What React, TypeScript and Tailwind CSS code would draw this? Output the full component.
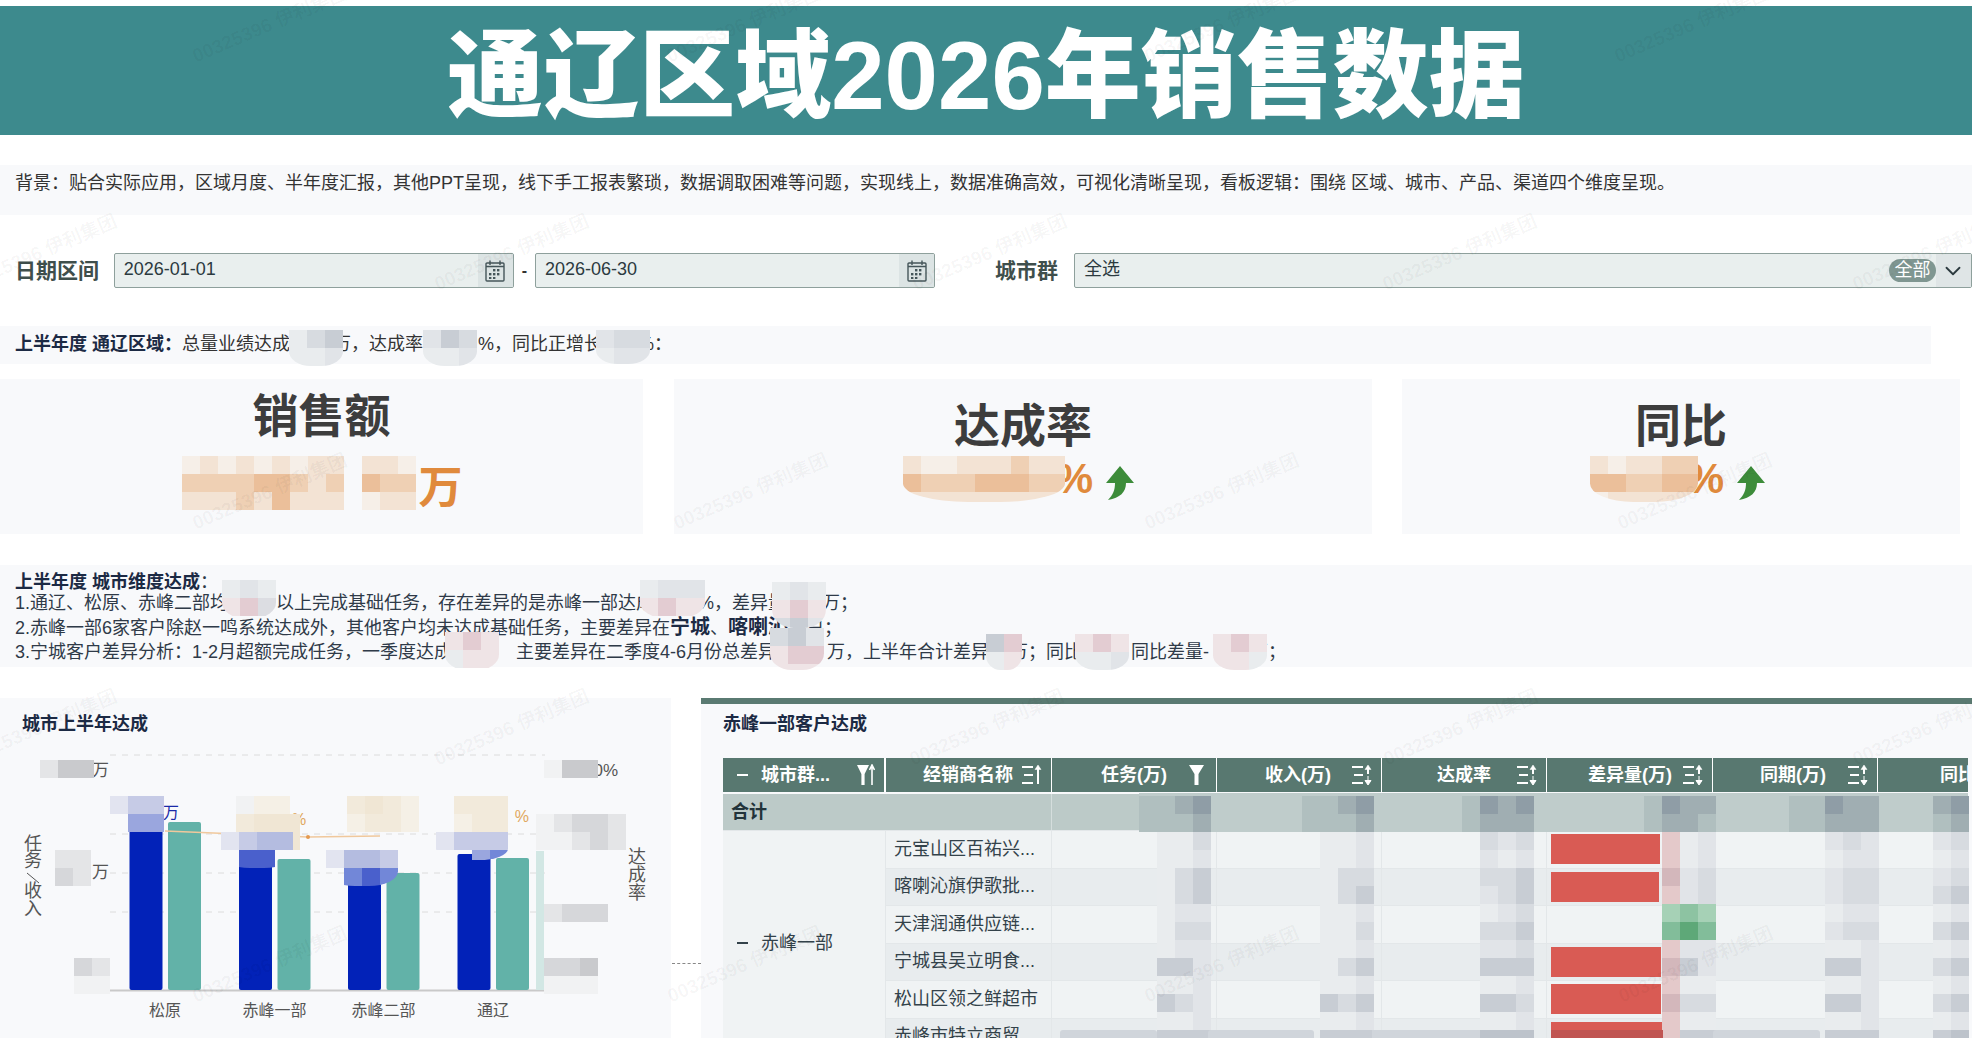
import { ChevronDown } from 'lucide-react';

// shade letters used by the redaction mosaics
const shades: Record<string, string> = {
  '.': 'transparent',
  a: '#e9ecee', b: '#e1e4e8', c: '#d7dbe0', d: '#c8cdd4', e: '#bdc3cb',
  t: '#b0bfbf', u: '#a0aeb2', v: '#8f9da6',
  i: '#f6efe8', j: '#f3e3d4', k: '#efd0b4', l: '#ebbf9a',
  m: '#f5f0e6', n: '#f2eadb', o: '#f0e6d4',
  p: '#e2e4f0', q: '#c6cbe6', r: '#9aa6de', s: '#4a60cc', w: '#7287d8', x: '#b4bce0',
  f: '#efe4e6', g: '#e3ccd2', h: '#dcdde2',
  y: '#a6d1b6', z: '#8dc3a2', A: '#5ea878', B: '#82bd9a',
  C: '#e4c9ca', D: '#d3b7bb',
  E: '#f1f2f3', F: '#e4e5e7', G: '#d6d7da', H: '#c9cacd',
};

type MosaicSpec = { x: number; y: number; rows: string[]; w?: number; h?: number; round?: boolean };

const mosaics: MosaicSpec[] = [
  // kpi sentence
  { x: 289, y: 330, rows: ['acd', 'aab'], h: 36, round: true },
  { x: 423, y: 330, rows: ['bdc', 'aab'], h: 36, round: true },
  { x: 596, y: 330, rows: ['bcc', 'abb'], h: 34, round: true },
  // kpi values
  { x: 182, y: 456, rows: ['ijijijijj.jji', 'kkkkllkjk.lkk', 'jjjkjljjj.ijj'] },
  { x: 903, y: 456, rows: ['jiijjjkjj', 'lkkklllkk', 'jjjjjjjjj'], h: 46, round: true },
  { x: 1590, y: 456, rows: ['jijjkk', 'llkkll', 'ijjjjj'], h: 46, round: true },
  // city analysis
  { x: 222, y: 580, rows: ['aba', 'fgh'], h: 38, round: true },
  { x: 640, y: 580, rows: ['abbb', 'fgff'], w: 65, h: 38, round: true },
  { x: 772, y: 582, rows: ['aba', 'fgf', 'cdb'], h: 46, round: true },
  { x: 445, y: 632, rows: ['fgf', 'aff'], h: 38, round: true },
  { x: 770, y: 628, rows: ['cdb', 'fgg', 'fff'], h: 42, round: true },
  { x: 986, y: 634, rows: ['dg', 'af'], h: 36, round: true },
  { x: 1075, y: 634, rows: ['fgf', 'aab'], h: 36, round: true },
  { x: 1213, y: 634, rows: ['fgf', 'ffa'], h: 36, round: true },
  // chart axes
  { x: 40, y: 760, rows: ['FHH'] },
  { x: 55, y: 850, rows: ['FF', 'GF'] },
  { x: 74, y: 958, rows: ['GF', 'EE'] },
  { x: 544, y: 760, rows: ['EHH'] },
  { x: 536, y: 814, rows: ['EFGGF', 'EEFGF'] },
  { x: 544, y: 904, rows: ['FGGG'], w: 64 },
  { x: 544, y: 958, rows: ['GGH', 'EEE'] },
  // chart labels
  { x: 110, y: 796, rows: ['pqq', '.rr'] },
  { x: 236, y: 796, rows: ['Emm.', 'nooo', 'oooo'], w: 64 },
  { x: 221, y: 832, rows: ['pqxx', '.ss'], h: 36, round: true },
  { x: 347, y: 796, rows: ['nonm', 'mnnm'] },
  { x: 326, y: 850, rows: ['pxxq', '.wsw'], h: 36, round: true },
  { x: 454, y: 796, rows: ['nnn', 'mnn'] },
  { x: 436, y: 832, rows: ['pqqq', '..rw'], h: 28, round: true },
  // table, total row
  { x: 1139, y: 796, rows: ['ttuv', 'tttu'] },
  { x: 1302, y: 796, rows: ['ttuv', 'tttu'] },
  { x: 1462, y: 796, rows: ['tvuv', 'tuuu'] },
  { x: 1644, y: 796, rows: ['tvuu', 'tuut'] },
  { x: 1789, y: 796, rows: ['ttvuu', 'ttuuu'] },
  { x: 1933, y: 796, rows: ['uv', 'tu'] },
  // table, columns
  { x: 1157, y: 832, rows: ['aac', 'aab', 'acd', 'acd', 'abb', 'acc', 'abb', 'ddb', 'aab', 'dcb', 'aab', 'ddd'] },
  { x: 1320, y: 832, rows: ['aab', 'aab', 'acc', 'acd', 'aab', 'aac', 'aab', 'acd', 'aab', 'dcd', 'aab', 'ddd'] },
  { x: 1480, y: 832, rows: ['cbc', 'bab', 'ccd', 'bcd', 'abc', 'ccd', 'bbc', 'ddd', 'aab', 'ddc', 'aab', 'eee'] },
  { x: 1662, y: 832, rows: ['Cab', 'Cab', 'Dbc', 'Cbc', 'yzy', 'BAB', 'Cbb', 'Ddb', 'Caa', 'Dcc', 'Caa', 'Cdd'] },
  { x: 1825, y: 832, rows: ['bcb', 'abb', 'bcc', 'bcc', 'abb', 'bcc', 'aab', 'ddb', 'aab', 'ddb', 'aab', 'ddd'] },
  { x: 1933, y: 832, rows: ['bc', 'ab', 'bc', 'cd', 'ab', 'cd', 'ab', 'cd', 'ab', 'cd', 'ab', 'de'] },
];

const bars = [
  { label: '松原', x: 129.5, blueTop: 823, tealTop: 821 },
  { label: '赤峰一部', x: 239, blueTop: 857, tealTop: 858 },
  { label: '赤峰二部', x: 348, blueTop: 877, tealTop: 872 },
  { label: '通辽', x: 457.5, blueTop: 853, tealTop: 857 },
];

const tableRows = [
  { name: '元宝山区百祐兴...', bar: 'w-[109px]', alt: false },
  { name: '喀喇沁旗伊歌批...', bar: 'w-[108px]', alt: true },
  { name: '天津润通供应链...', bar: '', alt: false },
  { name: '宁城县吴立明食...', bar: 'w-[110px]', alt: true },
  { name: '松山区领之鲜超市', bar: 'w-[110px]', alt: false },
  { name: '赤峰市特立商贸', bar: 'w-[112px]', alt: true },
];

const watermarks = [
  [270, 25], [744, 25], [1222, 25], [1692, 25],
  [40, 253], [512, 253], [990, 253], [1460, 253], [1930, 253],
  [270, 492], [751, 492], [1222, 492], [1695, 492],
  [40, 728], [512, 728], [987, 728], [1461, 728], [1930, 728],
  [270, 965], [745, 965], [1222, 965], [1696, 965],
];

function Mosaic({ x, y, rows, w, h, round }: MosaicSpec) {
  return (
    <div
      className={`absolute overflow-hidden ${round ? 'rounded-b-[40%]' : ''}`}
      style={{ left: x, top: y, height: h ?? rows.length * 18, width: w ?? rows[0].length * 18 }}
    >
      {rows.map((row, i) => (
        <div key={i} className="flex h-[18px]">
          {row.split('').map((c, j) => (
            <div key={j} className="w-[18px] h-[18px] shrink-0" style={{ backgroundColor: shades[c] }} />
          ))}
        </div>
      ))}
    </div>
  );
}

function CalendarIcon() {
  return (
    <div className="w-[35px] self-stretch bg-[#dce4e4] flex items-center justify-center">
      <svg width="20" height="22" viewBox="0 0 20 22" fill="none" stroke="#45565a" strokeWidth="1.4">
        <rect x="1" y="3" width="18" height="18" rx="1" />
        <path d="M5 0.5V5M15 0.5V5M1 6.5H19" />
        <g fill="#45565a" stroke="none">
          <rect x="8" y="9" width="2.4" height="2.4" />
          <rect x="12" y="9" width="2.4" height="2.4" />
          <rect x="4" y="13" width="2.4" height="2.4" />
          <rect x="8" y="13" width="2.4" height="2.4" />
          <rect x="12" y="13" width="2.4" height="2.4" />
          <rect x="4" y="17" width="2.4" height="2" />
          <rect x="8" y="17" width="2.4" height="2" />
        </g>
      </svg>
    </div>
  );
}

function DateInput({ value }: { value: string }) {
  return (
    <div className="w-[401px] h-[35px] flex items-center justify-between bg-[#e9efee] border border-[#8ea09c] rounded-[2px] overflow-hidden">
      <span className="pl-[9px] pb-[2px] text-[18px] text-[#2c3a3f]">{value}</span>
      <CalendarIcon />
    </div>
  );
}

function SortIcon({ down = true }: { down?: boolean }) {
  return (
    <svg width="22" height="22" viewBox="0 0 22 22" fill="none" stroke="#fff" strokeWidth="2">
      <path d="M1 3H12M3 11H12M1 19H12" />
      <path d={down ? 'M17 3V10' : 'M17 3V20'} />
      <path d="M14 5.5L17 1L20 5.5Z" fill="#fff" strokeWidth="0.5" />
      {down && <path d="M17 12V18M14 16.5L17 21L20 16.5Z" fill="#fff" strokeWidth="1" />}
    </svg>
  );
}

function Funnel({ small = false }: { small?: boolean }) {
  return (
    <svg width={small ? 12 : 15} height="22" viewBox="0 0 15 22" preserveAspectRatio="none" fill="#fff">
      <path d="M0 1H15L9.5 10V21H5.5V10Z" />
    </svg>
  );
}

function GreenArrow() {
  return (
    <svg width="28" height="34" viewBox="0 0 28 34" fill="#3d8c3a">
      <path d="M14 0L28 17H20C20 26 14 32 2 34C7 29 9 24 9 17H0Z" />
    </svg>
  );
}

function Card({ title, className, titleClass, children }: { title: string; className: string; titleClass: string; children: React.ReactNode }) {
  return (
    <div className={`bg-[#f8f9fb] h-full flex flex-col items-center ${className}`}>
      <h2 className={`text-[46px] leading-[46px] font-bold text-[#3d3d3d] ${titleClass}`}>{title}</h2>
      {children}
    </div>
  );
}

function Chart() {
  return (
    <svg width="671" height="298" viewBox="0 740 671 298" className="block">
      {[754, 833, 872, 911].map((y) => (
        <line key={y} x1="110" x2="545" y1={y} y2={y} stroke="#dcdcdc" strokeDasharray="6 6" />
      ))}
      <line x1="110" x2="548" y1="989.5" y2="989.5" stroke="#c9c9c9" strokeWidth="2" />
      {bars.map((b) => (
        <g key={b.label}>
          <rect x={b.x} y={b.blueTop} width="33" height={989 - b.blueTop} rx="2" fill="#0222b8" />
          <rect x={b.x + 38.5} y={b.tealTop} width="33" height={989 - b.tealTop} rx="2" fill="#62b2a8" />
          <text x={b.x + 35.5} y="1015" textAnchor="middle" fontSize="16" fill="#555">{b.label}</text>
        </g>
      ))}
      <path d="M165 830L308 836L380 835" stroke="#f0c89c" strokeWidth="1.5" fill="none" />
      <circle cx="308" cy="836" r="2" fill="#e49a50" />
      <rect x="536" y="850" width="8" height="139" fill="#d2e7e4" />
      <g fontSize="17" fill="#555">
        <text x="92" y="775">万</text>
        <text x="92" y="877">万</text>
        <text x="618" y="775" textAnchor="end">00%</text>
        <text x="618" y="838" textAnchor="end">%</text>
      </g>
      <text x="163" y="817" fontSize="16" fill="#1a2aa8">万</text>
      <text x="490" y="849" fontSize="16" fill="#1a2aa8">万</text>
      <text x="529" y="821" fontSize="16" fill="#e0a860" textAnchor="end">%</text>
      <text x="292" y="824" fontSize="16" fill="#e0a860">%</text>
      <g fontSize="18" fill="#555" textAnchor="middle">
        <text x="33" y="849">任</text>
        <text x="33" y="866">务</text>
        <path d="M27 872L39 882" stroke="#555" fill="none" />
        <text x="33" y="896">收</text>
        <text x="33" y="914">入</text>
        <text x="637" y="862">达</text>
        <text x="637" y="880">成</text>
        <text x="637" y="898">率</text>
      </g>
    </svg>
  );
}

function SalesTable() {
  return (
    <div className="w-[1245px] text-[18px] text-[#33424a]">
      <div className="grid grid-cols-[163px_166px_165px_165px_165px_166px_165px_90px] h-[34px] bg-[#587870] text-white font-bold mb-[2px]">
        <div className="flex items-center pl-[14px] border-r-2 border-white">
          <span className="w-[11px] h-[2px] bg-white mr-[13px]" />
          <span>城市群...</span>
          <span className="flex ml-[27px]">
            <Funnel small />
            <svg width="6" height="22" viewBox="0 0 6 22" fill="none" stroke="#fff" strokeWidth="1.6"><path d="M3 21V3M0.5 6L3 1L5.5 6" /></svg>
          </span>
        </div>
        <div className="flex items-center justify-end pr-[8px] border-r border-white">
          <span className="mr-[8px]">经销商名称</span><SortIcon down={false} />
        </div>
        <div className="flex items-center justify-end pr-[12px] border-r border-white">
          <span className="mr-[22px]">任务(万)</span><Funnel />
        </div>
        <div className="flex items-center justify-end pr-[8px] border-r border-white">
          <span className="mr-[20px]">收入(万)</span><SortIcon />
        </div>
        <div className="flex items-center justify-end pr-[8px] border-r border-white">
          <span className="mr-[25px]">达成率</span><SortIcon />
        </div>
        <div className="flex items-center justify-end pr-[8px] border-r border-white">
          <span className="mr-[10px]">差异量(万)</span><SortIcon />
        </div>
        <div className="flex items-center justify-end pr-[8px] border-r border-white">
          <span className="mr-[21px]">同期(万)</span><SortIcon />
        </div>
        <div className="flex items-center pl-[62px] whitespace-nowrap overflow-hidden">同比</div>
      </div>
      <div className="grid grid-cols-[329px_916px] h-[36px] bg-[#bccac8] font-bold text-[#22333a]">
        <div className="flex items-center pl-[8px] border-r border-[#d5dedd]">合计</div>
        <div />
      </div>
      <div className="flex">
        <div className="w-[163px] h-[225px] flex items-center pl-[14px] bg-[#f0f3f4] border-r border-[#e3e7e9] border-t border-t-[#e3e7e9]">
          <span className="w-[11px] h-[2px] bg-[#33424a] mr-[13px]" />
          赤峰一部
        </div>
        <div className="flex-1">
          {tableRows.map((r) => (
            <div
              key={r.name}
              className={`grid grid-cols-[166px_165px_165px_165px_166px_165px_90px] h-[37.5px] border-t border-[#e3e7e9] ${r.alt ? 'bg-[#e8ecee]' : 'bg-[#f0f3f4]'}`}
            >
              <div className="flex items-center pl-[8px] border-r border-[#e3e7e9] whitespace-nowrap">{r.name}</div>
              <div className="border-r border-[#e3e7e9]" />
              <div className="border-r border-[#e3e7e9]" />
              <div className="border-r border-[#e3e7e9]" />
              <div className="flex items-center pl-[4px] border-r border-[#e3e7e9]">
                {r.bar && <div className={`h-[30px] bg-[#d95b54] ${r.bar}`} />}
              </div>
              <div className="border-r border-[#e3e7e9]" />
              <div />
            </div>
          ))}
        </div>
      </div>
    </div>
  );
}

export default function App() {
  return (
    <div className="relative w-[1972px] h-[1038px] overflow-hidden bg-white pt-[6px] [font-family:'Liberation_Sans','Noto_Sans_CJK_SC',sans-serif]">
      <header className="h-[129px] pt-[10px] bg-[#3d8a8d] flex items-center justify-center">
        <h1 className="text-[96px] leading-none font-black text-white whitespace-nowrap">通辽区域2026年销售数据</h1>
      </header>

      <section className="mt-[30px] h-[50px] bg-[#f8f9fb] pl-[15px] pt-[5px] text-[18px] leading-[26px] text-[#333] whitespace-nowrap">
        背景：贴合实际应用，区域月度、半年度汇报，其他PPT呈现，线下手工报表繁琐，数据调取困难等问题，实现线上，数据准确高效，可视化清晰呈现，看板逻辑：围绕 区域、城市、产品、渠道四个维度呈现。
      </section>

      <section className="mt-[38px] h-[35px] flex items-center">
        <label className="ml-[15px] w-[99px] text-[21px] font-bold text-[#3f4f4c]">日期区间</label>
        <DateInput value="2026-01-01" />
        <span className="w-[21px] text-center font-bold text-[#333]">-</span>
        <DateInput value="2026-06-30" />
        <label className="ml-[60px] w-[79px] text-[21px] font-bold text-[#3f4f4c]">城市群</label>
        <div className="w-[900px] h-[35px] flex items-center bg-[#e9efee] border border-[#8ea09c] rounded-[2px]">
          <span className="pl-[9px] pb-[2px] flex-1 text-[18px] text-[#2c3a3f]">全选</span>
          <span className="w-[47px] h-[23px] rounded-full bg-[#7f9691] text-white text-[18px] leading-[23px] text-center">全部</span>
          <span className="w-[35px] self-stretch bg-[#dfe5e6] flex items-center pl-[4px]">
            <ChevronDown size={26} strokeWidth={1.7} color="#2c3a3f" />
          </span>
        </div>
      </section>

      <section className="mt-[38px] w-[1931px] h-[38px] bg-[#f8f9fb] pl-[15px] pb-[2px] flex items-center text-[18px] text-[#333] whitespace-nowrap">
        <b className="text-[#1c2a44]">上半年度 通辽区域：</b>
        总量业绩达成<span className="inline-block w-[43px]" />万，达成率<span className="inline-block w-[55px]" />%，同比正增长<span className="inline-block w-[36px]" />%：
      </section>

      <section className="mt-[15px] h-[155px] flex">
        <Card title="销售额" className="w-[643px]" titleClass="mt-[14px] mb-[4px]">
          <div className="mt-[21px] ml-[238px] text-[44px] leading-[48px] font-bold text-[#e08a3c]">万</div>
        </Card>
        <Card title="达成率" className="w-[698px] ml-[31px]" titleClass="mt-[24px]">
          <div className="flex items-center mt-[12px] ml-[144px] h-[44px]">
            <span className="mb-[8px] text-[42px] leading-[44px] font-bold text-[#e08a3c]">%</span>
            <span className="ml-[13px]"><GreenArrow /></span>
          </div>
        </Card>
        <Card title="同比" className="w-[558px] ml-[30px]" titleClass="mt-[24px]">
          <div className="flex items-center mt-[12px] ml-[90px] h-[44px]">
            <span className="mb-[8px] text-[42px] leading-[44px] font-bold text-[#e08a3c]">%</span>
            <span className="ml-[13px]"><GreenArrow /></span>
          </div>
        </Card>
      </section>

      <section className="mt-[31px] h-[102px] bg-[#f8f9fb] pl-[15px] pt-[7px] text-[18px] text-[#2f3a48] whitespace-nowrap">
        <div className="leading-[21px]"><b className="text-[#1c2a44]">上半年度 城市维度达成</b>：</div>
        <div className="leading-[21px]">
          1.通辽、松原、赤峰二部均<span className="inline-block w-[48px]" />以上完成基础任务，存在差异的是赤峰一部达成<span className="inline-block w-[44px]" />%，差异量<span className="inline-block w-[36px]" />万；
        </div>
        <div className="leading-[27px]">
          2.赤峰一部6家客户除赵一鸣系统达成外，其他客户均未达成基础任务，主要差异在<b className="text-[#1c2a44] text-[20px]">宁城</b>、<b className="text-[#1c2a44] text-[20px]">喀喇沁</b>客户；
        </div>
        <div className="leading-[21px]">
          3.宁城客户差异分析：1-2月超额完成任务，一季度达成<span className="inline-block w-[64px]" />主要差异在二季度4-6月份总差异<span className="inline-block w-[51px]" />万，上半年合计差异<span className="inline-block w-[21px]" />万；同比<span className="inline-block w-[49px]" />同比差量-<span className="inline-block w-[41px]" />万；
        </div>
      </section>

      <section className="mt-[31px] h-[341px] flex">
        <div className="w-[671px] bg-[#f8f9fb]">
          <h3 className="pl-[22px] pt-[15px] h-[43px] text-[18px] leading-[22px] font-bold text-[#1c2a44]">城市上半年达成</h3>
          <Chart />
        </div>
        <div className="ml-[30px] flex-1 bg-[#f8f9fb] border-t-[6px] border-[#5a7a72] pl-[22px]">
          <h3 className="pt-[9px] h-[54px] text-[18px] leading-[22px] font-bold text-[#1c2a44]">赤峰一部客户达成</h3>
          <SalesTable />
        </div>
      </section>

      {/* redactions sit on top of the figures */}
      <div className="absolute left-[1139px] top-[793px] w-[829px] h-[39px] bg-[#bfcccb] rounded-b-[6px]" />
      {mosaics.map((m, i) => (
        <Mosaic key={i} {...m} />
      ))}
      <div className="absolute left-[672px] top-[963px] w-[29px] border-t border-dashed border-[#888]" />
      <div className="absolute left-[1060px] top-[1030px] w-[97px] h-[8px] bg-[#d0d5db] rounded-t-[3px]" />
      <div className="absolute left-[1208px] top-[1030px] w-[106px] h-[8px] bg-[#d0d5db] rounded-t-[3px]" />
      <div className="absolute left-[1372px] top-[1030px] w-[108px] h-[8px] bg-[#d0d5db]" />
      <div className="absolute left-[1551px] top-[1030px] w-[112px] h-[8px] bg-[#c05552]" />
      <div className="absolute left-[1713px] top-[1030px] w-[107px] h-[8px] bg-[#d0d5db] rounded-t-[3px]" />

      {/* faint tiled watermark */}
      {watermarks.map(([x, y]) => (
        <div
          key={`${x}-${y}`}
          className="absolute -translate-x-1/2 -translate-y-1/2 -rotate-[23deg] text-[19px] font-bold text-black/[0.04] whitespace-nowrap pointer-events-none"
          style={{ left: x, top: y }}
        >
          00325396 伊利集团
        </div>
      ))}
    </div>
  );
}
